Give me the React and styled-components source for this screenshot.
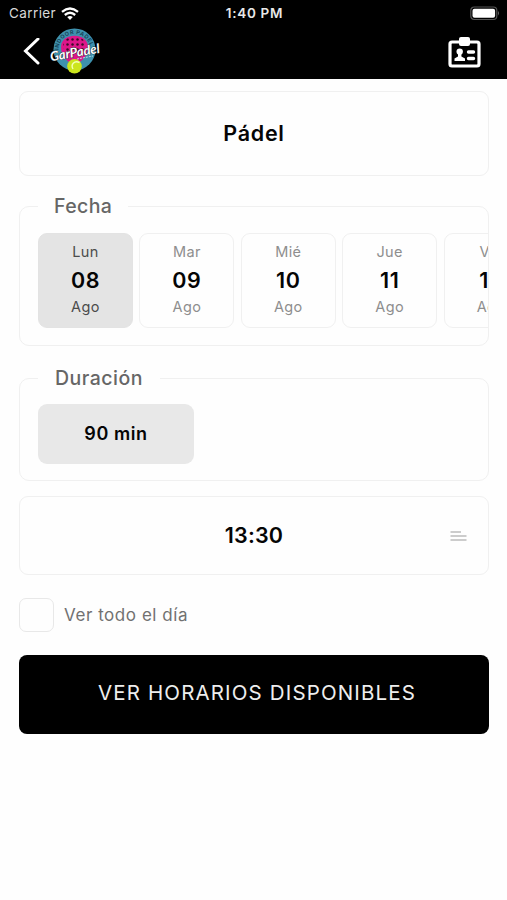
import styled, { createGlobalStyle } from "styled-components";

const GlobalStyle = createGlobalStyle`
  * {
    box-sizing: border-box;
  }
  body {
    margin: 0;
    background-color: #fefefe;
    font-family: Inter, "Liberation Sans", sans-serif;
  }
`;

const Screen = styled.div`
  width: 507px;
  height: 900px;
  overflow: hidden;
`;

const Header = styled.header`
  height: 79px;
  background-color: #000;
  color: #fff;
`;

const StatusBar = styled.div`
  display: grid;
  grid-template-columns: 1fr auto 1fr;
  align-items: center;
  height: 27px;
  padding: 0 7px 0 9px;
  font-size: 13px;
  line-height: 27px;
`;

const Carrier = styled.div`
  display: flex;
  align-items: center;
  gap: 5px;
  color: #d8d8d8;
  font-size: 13.5px;
  letter-spacing: 0.4px;
`;

const Clock = styled.div`
  color: #e8e8e8;
  font-size: 13.5px;
  font-weight: 600;
  letter-spacing: 0.7px;
`;

const Battery = styled.svg`
  justify-self: end;
`;

const NavBar = styled.nav`
  display: flex;
  align-items: center;
  height: 50px;
  padding: 0 26px 0 22px;
`;

const Logo = styled.svg`
  margin: -2px auto 0 9px;
`;

const Content = styled.main`
  display: flex;
  flex-direction: column;
  padding: 12px 18px 0 19px;
`;

const Card = styled.div`
  display: grid;
  grid-template-columns: 1fr auto 1fr;
  align-items: center;
  height: ${(props) => props.$height}px;
  margin-top: ${(props) => props.$top || 0}px;
  padding: 0 21px;
  border: 1px solid #f0f0f0;
  border-radius: 9px;
`;

const CardTitle = styled.div`
  grid-column: 2;
  padding-bottom: 2px;
  color: #050505;
  font-size: 21.5px;
  font-weight: 600;
  letter-spacing: ${(props) => props.$spacing || 0}px;
`;

const LinesIcon = styled.svg`
  justify-self: end;
`;

const Group = styled.fieldset`
  min-width: 0;
  height: ${(props) => props.$height}px;
  margin: ${(props) => props.$top}px 0 0;
  padding: 0 0 0 18px;
  border: 1px solid #f0f0f0;
  border-radius: 10px;
`;

const Legend = styled.legend`
  width: ${(props) => props.$width}px;
  height: 24px;
  padding: 0 0 0 ${(props) => props.$indent}px;
  color: #666;
  font-size: 19.5px;
  font-weight: 500;
  line-height: 24px;
  letter-spacing: ${(props) => props.$spacing}px;
`;

const Days = styled.div`
  display: flex;
  gap: 6.4px;
  margin-top: 15px;
  overflow: hidden;
`;

const Day = styled.div`
  display: flex;
  flex: 0 0 95px;
  flex-direction: column;
  align-items: center;
  height: 95px;
  padding-top: 8px;
  border: 1px solid ${(props) => (props.$active ? "#e3e3e3" : "#f0f0f0")};
  border-radius: 9px;
  background-color: ${(props) => (props.$active ? "#e4e4e4" : "transparent")};
  color: ${(props) => (props.$active ? "#4c4c4c" : "#8e8e8e")};
`;

const DayLabel = styled.span`
  font-size: 14.5px;
  line-height: 20px;
  letter-spacing: 0.4px;
`;

const DayNumber = styled.span`
  margin: 8px 0 7px;
  color: #050505;
  font-size: 21.5px;
  font-weight: 600;
  line-height: 20px;
  letter-spacing: 0.6px;
`;

const Duration = styled.div`
  display: flex;
  align-items: center;
  justify-content: center;
  width: 156px;
  height: 60px;
  margin-top: 14px;
  padding-bottom: 2px;
  border-radius: 9px;
  background-color: #e8e8e8;
  color: #050505;
  font-size: 18px;
  font-weight: 600;
  letter-spacing: 0.6px;
`;

const CheckRow = styled.label`
  display: flex;
  align-items: center;
  gap: 10px;
  height: 34px;
  margin-top: 23px;
  color: #717171;
  font-size: 17px;
  letter-spacing: 0.55px;
`;

const CheckBox = styled.span`
  width: 35px;
  height: 34px;
  border: 1px solid #e8e8e8;
  border-radius: 7px;
`;

const SubmitButton = styled.button`
  height: 79px;
  margin-top: 23px;
  padding: 0 0 4px 6px;
  border: 0;
  border-radius: 8px;
  background-color: #000;
  color: #eee;
  font-family: inherit;
  font-size: 20.5px;
  letter-spacing: 1.15px;
`;

const days = [
  { name: "Lun", number: "08" },
  { name: "Mar", number: "09" },
  { name: "Mié", number: "10" },
  { name: "Jue", number: "11" },
  { name: "Vie", number: "12" },
];

function WifiIcon() {
  return (
    <svg width="18" height="14" viewBox="0 0 18 14" fill="none" stroke="#fff" strokeWidth="2.3">
      <path d="M1 4.8Q9 -1.8 17 4.8" />
      <path d="M3.8 8Q9 3.6 14.2 8" />
      <path d="M6.2 10Q9 7.8 11.8 10L9 13Z" fill="#fff" stroke="none" />
    </svg>
  );
}

function GarPadelLogo() {
  return (
    <Logo width="52" height="48" viewBox="0 0 52 48">
      <defs>
        <pattern id="holes" width="5" height="5" patternUnits="userSpaceOnUse">
          <circle cx="2.5" cy="2.5" r="1.25" fill="#3c092a" />
        </pattern>
        <path id="arc" d="M8.5 23A16 16 0 0 1 40.5 23" />
      </defs>
      <circle cx="24.5" cy="22.5" r="21" fill="#3e91ad" />
      <text fill="#17465b" fontSize="5.5" fontWeight="700">
        <textPath href="#arc" textLength="46">INDOOR PADEL</textPath>
      </text>
      <path d="M11 20C11 5 38 5 38 20C38 30 30 36 24 38C17 35 11 29 11 20Z" fill="#dd1689" />
      <path d="M13 19C14 6 35 6 36 19L34 26H15Z" fill="url(#holes)" />
      <text
        x="0"
        y="30"
        transform="rotate(-10 25 26)"
        fontFamily="Lato"
        fontSize="13"
        fontStyle="italic"
        fontWeight="700"
        textLength="50"
        lengthAdjust="spacingAndGlyphs"
        fill="#fff"
        stroke="#19252e"
        strokeWidth="0.8"
        paintOrder="stroke"
      >
        GarPadel
      </text>
      <path d="M27 32L43 29" stroke="#b5dce7" strokeWidth="1" strokeDasharray="2 1" />
      <circle cx="24.5" cy="39.3" r="7.3" fill="#cce51d" />
      <path d="M29.5 35.5C24 33 20.5 38 23 42" fill="none" stroke="#f4ffb4" strokeWidth="1.4" />
    </Logo>
  );
}

function BadgeIcon() {
  return (
    <svg width="33" height="31" viewBox="0 0 33 31">
      <rect x="2" y="5" width="29" height="24" rx="2" fill="none" stroke="#fff" strokeWidth="3.2" />
      <rect x="11" y="0" width="11" height="9" rx="2" fill="#fff" />
      <circle cx="11.7" cy="14.6" r="3.2" fill="#fff" />
      <path d="M6.5 24V21.5L10 19.5V17H13.4V19.5L17 21.5V24Z" fill="#fff" />
      <path d="M20.5 15H25.5M20.5 21.5H25.5" stroke="#fff" strokeWidth="3.4" strokeLinecap="round" />
    </svg>
  );
}

export default function App() {
  return (
    <Screen>
      <GlobalStyle />
      <Header>
        <StatusBar>
          <Carrier>
            Carrier
            <WifiIcon />
          </Carrier>
          <Clock>1:40 PM</Clock>
          <Battery width="30" height="15" viewBox="0 0 30 15">
            <rect x="0.8" y="1" width="26" height="12.5" rx="3.5" fill="none" stroke="#555" strokeWidth="1.2" />
            <rect x="2.5" y="2.7" width="22.6" height="9.1" rx="2" fill="#fff" />
            <path d="M28 5V9.5Q30 7.2 28 5Z" fill="#666" />
          </Battery>
        </StatusBar>
        <NavBar>
          <svg width="19" height="28" viewBox="0 0 19 28">
            <path d="M16 1L3.5 13L16 25" fill="none" stroke="#fff" strokeWidth="3" strokeLinecap="round" />
          </svg>
          <GarPadelLogo />
          <BadgeIcon />
        </NavBar>
      </Header>
      <Content>
        <Card $height={85}>
          <CardTitle $spacing={0.7}>Pádel</CardTitle>
        </Card>

        <Group $height={152} $top={18}>
          <Legend $width={90} $indent={16} $spacing={0.4}>
            Fecha
          </Legend>
          <Days>
            {days.map((day, index) => (
              <Day key={day.number} $active={index === 0}>
                <DayLabel>{day.name}</DayLabel>
                <DayNumber>{day.number}</DayNumber>
                <DayLabel>Ago</DayLabel>
              </Day>
            ))}
          </Days>
        </Group>

        <Group $height={115} $top={20}>
          <Legend $width={122} $indent={17} $spacing={0.5}>
            Duración
          </Legend>
          <Duration>90 min</Duration>
        </Group>

        <Card $height={79} $top={15}>
          <CardTitle $spacing={0.2}>13:30</CardTitle>
          <LinesIcon width="17" height="12" viewBox="0 0 17 12">
            <path d="M0.5 2H11M0.5 6H16.5M0.5 10H16.5" stroke="#bcbcbc" strokeWidth="1.7" />
          </LinesIcon>
        </Card>

        <CheckRow>
          <CheckBox />
          Ver todo el día
        </CheckRow>
        <SubmitButton>VER HORARIOS DISPONIBLES</SubmitButton>
      </Content>
    </Screen>
  );
}
